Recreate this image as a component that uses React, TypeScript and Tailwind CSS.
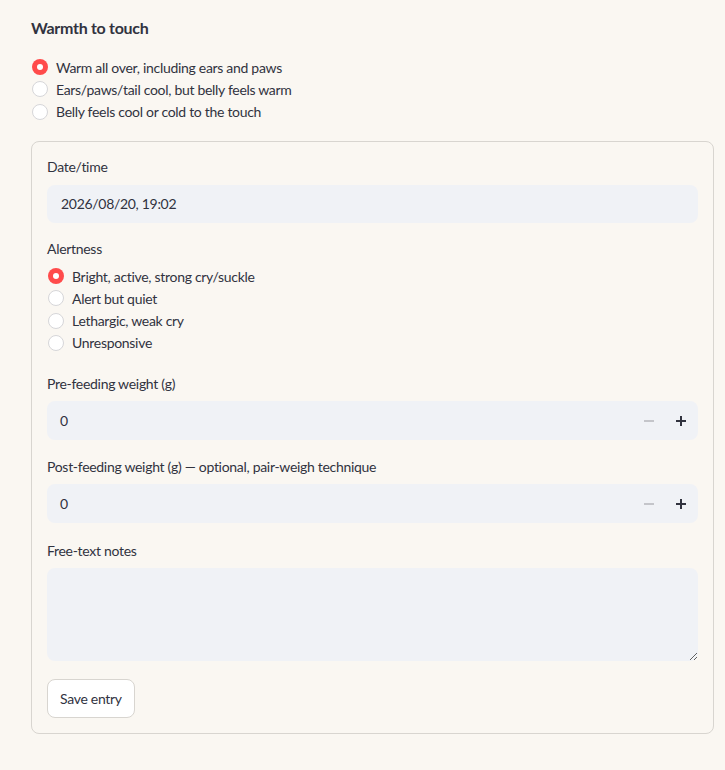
import React, { useState } from 'react';

const font = { fontFamily: 'Lato, "Noto Sans", sans-serif', letterSpacing: '-0.3px' };

interface RadioGroupProps {
  options: string[];
  value: number;
  onChange: (i: number) => void;
}

const RadioGroup = ({ options, value, onChange }: RadioGroupProps) => (
  <div className="flex flex-col">
    {options.map((opt, i) => (
      <label key={i} className="flex items-center h-[22.3px] cursor-pointer" onClick={() => onChange(i)}>
        <span
          className={`flex items-center justify-center w-4 h-4 rounded-full mr-2 ${
            value === i ? 'bg-[#ff4b4b]' : 'bg-white border border-[#d6d6d9]'
          }`}
        >
          {value === i && <span className="w-1.5 h-1.5 rounded-full bg-white" />}
        </span>
        <span className="text-[14px] text-[#31333f]">{opt}</span>
      </label>
    ))}
  </div>
);

const Label = ({ children }: { children: React.ReactNode }) => (
  <div className="text-[14px] text-[#31333f] h-[22px] flex items-center mb-[7px]">{children}</div>
);

const NumberInput = ({ value, onChange }: { value: number; onChange: (v: number) => void }) => (
  <div className="flex items-center h-[39px] rounded-lg bg-[#f0f2f6]">
    <span className="flex-1 pl-[13px] text-[14px] text-[#31333f]">{value}</span>
    <button
      className="w-8 h-full flex items-center justify-center text-[#b9bac0]"
      onClick={() => onChange(Math.max(0, value - 1))}
    >
      <svg width="10" height="10" viewBox="0 0 10 10">
        <path d="M0 5h10" stroke="currentColor" strokeWidth="1.6" />
      </svg>
    </button>
    <button
      className="w-8 h-full mr-[1px] flex items-center justify-center text-[#31333f]"
      onClick={() => onChange(value + 1)}
    >
      <svg width="10" height="10" viewBox="0 0 10 10">
        <path d="M0 5h10M5 0v10" stroke="currentColor" strokeWidth="2" />
      </svg>
    </button>
  </div>
);

export default function App() {
  const [warmth, setWarmth] = useState(0);
  const [alert, setAlert] = useState(0);
  const [pre, setPre] = useState(0);
  const [post, setPost] = useState(0);

  return (
    <div className="min-h-[770px] bg-[#faf7f2] px-[31px] pt-[17px] pb-8" style={font}>
      <h3 className="text-[16px] font-bold text-[#31333f] h-[22px] flex items-center">Warmth to touch</h3>
      <div className="mt-[17px] pl-px">
        <RadioGroup
          options={[
            'Warm all over, including ears and paws',
            'Ears/paws/tail cool, but belly feels warm',
            'Belly feels cool or cold to the touch',
          ]}
          value={warmth}
          onChange={setWarmth}
        />
      </div>

      <div className="mt-[18px] w-[683px] border border-[#d8d5d0] rounded-lg px-[15px] pt-[14px] pb-[15px]">
        <Label>Date/time</Label>
        <div className="h-[38px] rounded-lg bg-[#f0f2f6] flex items-center pl-[14px] text-[14px] text-[#31333f]">
          2026/08/20, 19:02
        </div>

        <div className="mt-[15px]">
          <Label>Alertness</Label>
          <div className="pl-px -mt-[2px]">
            <RadioGroup
              options={['Bright, active, strong cry/suckle', 'Alert but quiet', 'Lethargic, weak cry', 'Unresponsive']}
              value={alert}
              onChange={setAlert}
            />
          </div>
        </div>

        <div className="mt-[18px]">
          <Label>Pre-feeding weight (g)</Label>
          <NumberInput value={pre} onChange={setPre} />
        </div>

        <div className="mt-[15px]">
          <Label>Post-feeding weight (g) — optional, pair-weigh technique</Label>
          <NumberInput value={post} onChange={setPost} />
        </div>

        <div className="mt-[16px]">
          <Label>Free-text notes</Label>
          <textarea className="block w-full h-[93px] rounded-lg bg-[#f0f2f6] outline-none px-[14px] py-2 text-[14px] text-[#31333f]" />
        </div>

        <button className="mt-[18px] h-[39px] px-[12px] rounded-lg bg-white border border-[#d8d5d0] text-[14px] text-[#31333f]">
          Save entry
        </button>
      </div>
    </div>
  );
}
